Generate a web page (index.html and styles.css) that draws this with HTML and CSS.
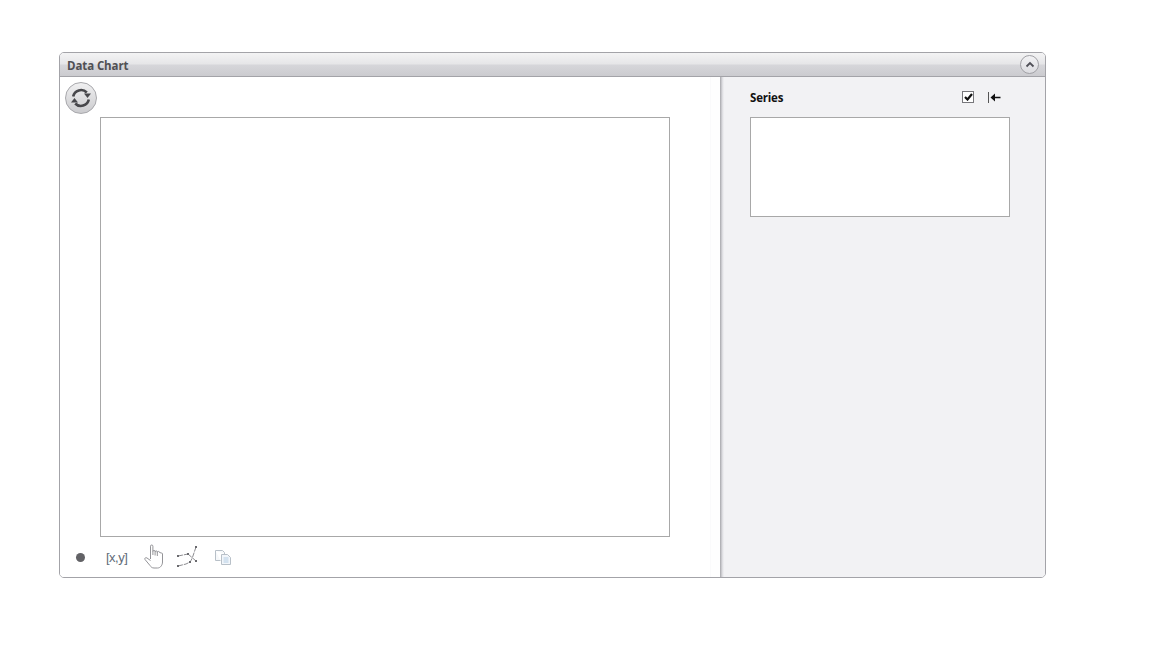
FILE: index.html
```html
<!DOCTYPE html>
<html lang="en">
<head>
<meta charset="utf-8">
<title>Data Chart</title>
<link rel="stylesheet" href="styles.css">
</head>
<body>
<section class="panel">
  <header class="panel-head">
    <h1 class="panel-title">Data Chart</h1>
    <button class="collapse" type="button" aria-label="Collapse">
      <svg width="12" height="12" viewBox="0 0 12 12"><path d="M2.500 7.500 6 4l3.500 3.500" fill="none" stroke="#505058" stroke-width="1.800"/></svg>
    </button>
  </header>
  <div class="panel-body">
    <main class="chart-pane">
      <div class="top-row">
        <button class="refresh" type="button" aria-label="Refresh">
          <svg width="24" height="24" viewBox="0 0 24 24">
            <path d="M4.200 10.500A8 8 0 0 1 17.800 6.500" fill="none" stroke="#47474b" stroke-width="2.600"/>
            <path d="M15 7.500h7l-3.500 4.500z" fill="#47474b"/>
            <path d="M19.800 13.500A8 8 0 0 1 6.200 17.500" fill="none" stroke="#47474b" stroke-width="2.600"/>
            <path d="M9 16.500H2l3.500-4.500z" fill="#47474b"/>
          </svg>
        </button>
      </div>
      <div class="chart-box"></div>
      <div class="tools">
        <span class="dot"></span>
        <span class="coords">[x,y]</span>
        <svg class="hand" width="20" height="25" viewBox="0 0 20 25">
          <path d="M6.500 15V2.200a1.200 1.200 0 0 1 2.400 0V11M8.900 7.500a1.100 1.100 0 0 1 2.200 0v4M11.100 8a1.100 1.100 0 0 1 2.200 0v4M13.300 8.500a1.100 1.100 0 0 1 2.200 0l2 .500a1 1 0 0 1 1 1V18c0 3-2 6-5 6H10c-2 0-3-1-4-2.500L1 15.500c-.8-1.200.8-2.500 2-1.500l3.500 2.500" fill="#fff" stroke="#949498" stroke-width="1"/>
        </svg>
        <svg class="curve" width="24" height="24" viewBox="0 0 24 24">
          <path d="M2 11l10-2M2 21l8-2 4-2c3-4 4-10 6-15M12 9l8 7" fill="none" stroke="#8c8c90" stroke-width="1" stroke-dasharray="5 1"/>
          <path d="M1 10h2v2H1zM1 20h2v2H1zM11 8h2v2h-2zM13 16h2v2h-2zM19 1h2v2h-2zM19 15h2v2h-2z" fill="#6a6a6e"/>
        </svg>
        <svg class="copy" width="17" height="15" viewBox="0 0 17 15">
          <path d="M.500.500h7l2 2V4M.500.500v10h5" fill="#f6f8fa" stroke="#b8c0c8"/>
          <path d="M6.500 4.500h6l3 3v7h-9z" fill="#f2f6fb" stroke="#b8c0c8"/>
          <path d="M8.500 8h5M8.500 10h5M8.500 12h5" stroke="#b4cde3"/>
        </svg>
      </div>
    </main>
    <aside class="side-pane">
      <div class="side-head">
        <span class="side-title">Series</span>
        <span class="check">
          <svg width="9" height="8" viewBox="0 0 9 8"><path d="M1 4l2.500 2.500L8 1" fill="none" stroke="#111" stroke-width="2.200"/></svg>
        </span>
        <svg class="collapse-left" width="13" height="11" viewBox="0 0 13 11">
          <path d="M.500 0v11" stroke="#555" stroke-width="1"/>
          <path d="M2.500 5.500 7 1.500v3.200h5.500v1.500H7v3.300z" fill="#111"/>
        </svg>
      </div>
      <div class="series-box"></div>
    </aside>
  </div>
</section>
</body>
</html>
```
FILE: styles.css
```css
html, body {
  margin: 0;
  padding: 0;
  background: #fff;
}
body {
  padding: 52px 0 0 59px;
  font-family: "Open Sans", "Noto Sans", sans-serif;
}
.panel {
  box-sizing: border-box;
  width: 987px;
  height: 526px;
  border: 1px solid #a3a3a8;
  border-radius: 5px;
  overflow: hidden;
  display: flex;
  flex-direction: column;
  background: #fff;
}
.panel-head {
  flex: none;
  box-sizing: border-box;
  height: 24px;
  display: flex;
  align-items: center;
  justify-content: space-between;
  padding: 2px 6px 0 7px;
  border-bottom: 1px solid #a3a3a8;
  background: linear-gradient(#f3f3f4 0, #e6e6e8 11px, #d6d6da 12px, #cbcbcf 100%);
}
.panel-title {
  margin: 0;
  font-size: 11.500px;
  font-weight: 700;
  letter-spacing: -0.100px;
  color: #505054;
  line-height: 20px;
}
.collapse {
  box-sizing: border-box;
  width: 19px;
  height: 19px;
  margin-top: -2px;
  padding: 0;
  border: 1px solid #a0a0a5;
  border-radius: 50%;
  background: linear-gradient(#f2f2f4, #dcdce0);
  display: flex;
  align-items: center;
  justify-content: center;
}
.panel-body {
  flex: 1;
  min-height: 0;
  display: flex;
}
.chart-pane {
  box-sizing: border-box;
  width: 660px;
  display: flex;
  flex-direction: column;
  padding-left: 5px;
  background: linear-gradient(90deg, #fff 650px, #fafafb 650px, #fafafb 651px, #fefefe 651px);
}
.top-row {
  height: 40px;
  display: flex;
  align-items: flex-start;
  padding-top: 5px;
  box-sizing: border-box;
}
.refresh {
  box-sizing: border-box;
  width: 32px;
  height: 32px;
  padding: 0;
  border: 1px solid #a8a8ac;
  border-radius: 50%;
  background: linear-gradient(#f0f0f1, #cbcbce);
  display: flex;
  align-items: center;
  justify-content: center;
}
.chart-box {
  box-sizing: border-box;
  width: 570px;
  height: 420px;
  margin-left: 35px;
  border: 1px solid #a8a8a8;
  background: #fff;
}
.tools {
  display: flex;
  align-items: center;
  height: 40px;
  padding-left: 11px;
}
.dot {
  width: 9px;
  height: 9px;
  border-radius: 50%;
  background: #626266;
}
.coords {
  margin-left: 21px;
  width: 38px;
  font-family: "Liberation Sans", sans-serif;
  font-size: 13px;
  letter-spacing: -0.500px;
  color: #616b78;
}
.hand {
  margin-top: -1px;
}
.curve {
  margin-left: 12px;
}
.copy {
  margin-left: 15px;
}
.side-pane {
  flex: 1;
  box-sizing: border-box;
  background: linear-gradient(90deg, #a9a9ad 0, #bcbcc0 1px, #d8d8dc 2px, #f2f2f4 4px);
  padding-left: 30px;
}
.side-head {
  height: 40px;
  display: flex;
  align-items: center;
}
.side-title {
  width: 212px;
  font-size: 11.500px;
  font-weight: 700;
  letter-spacing: -0.200px;
  color: #111;
}
.check {
  box-sizing: border-box;
  width: 12px;
  height: 12px;
  border: 1px solid #77777b;
  background: #fff;
  display: flex;
  align-items: center;
  justify-content: center;
}
.collapse-left {
  margin-left: 14px;
}
.series-box {
  box-sizing: border-box;
  width: 260px;
  height: 100px;
  border: 1px solid #a8a8a8;
  background: #fff;
}
```
